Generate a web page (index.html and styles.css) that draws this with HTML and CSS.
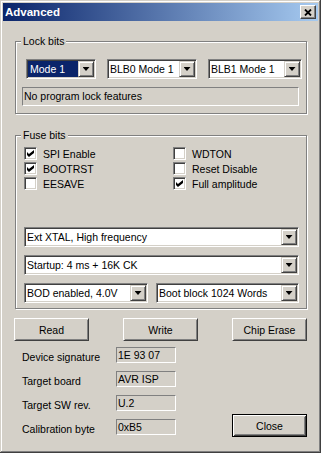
FILE: index.html
```html
<!DOCTYPE html>
<html lang="en">
<head>
    <meta charset="UTF-8">
    <title>Advanced</title>
    <link rel="stylesheet" href="styles.css">
</head>
<body>
    <div class="window">
        <div class="titlebar">
            <span class="title">Advanced</span>
            <span class="title-close">
                <svg width="8" height="7" viewBox="0 0 8 7"><path d="M1 0.5L7 6.5M7 0.5L1 6.5" stroke="#000" stroke-width="1.8"/></svg>
            </span>
        </div>

        <div class="client">
            <!-- Lock bits -->
            <fieldset class="group lock">
                <legend>Lock bits</legend>
                <div class="lock-row">
                    <div class="combo w-mode focused"><span class="combo-text">Mode 1</span><span class="drop"></span></div>
                    <div class="combo w-blb0"><span class="combo-text">BLB0 Mode 1</span><span class="drop"></span></div>
                    <div class="combo w-blb1"><span class="combo-text">BLB1 Mode 1</span><span class="drop"></span></div>
                </div>
                <div class="status">No program lock features</div>
            </fieldset>

            <!-- Fuse bits -->
            <fieldset class="group fuse">
                <legend>Fuse bits</legend>
                <div class="checks">
                    <label class="check"><span class="box checked"></span>SPI Enable</label>
                    <label class="check"><span class="box"></span>WDTON</label>
                    <label class="check"><span class="box checked"></span>BOOTRST</label>
                    <label class="check"><span class="box"></span>Reset Disable</label>
                    <label class="check"><span class="box"></span>EESAVE</label>
                    <label class="check"><span class="box checked"></span>Full amplitude</label>
                </div>
                <div class="fuse-combos">
                    <div class="combo w-full"><span class="combo-text">Ext XTAL, High frequency</span><span class="drop"></span></div>
                    <div class="combo w-full"><span class="combo-text">Startup: 4 ms + 16K CK</span><span class="drop"></span></div>
                    <div class="combo-split">
                        <div class="combo w-bod"><span class="combo-text">BOD enabled, 4.0V</span><span class="drop"></span></div>
                        <div class="combo w-boot"><span class="combo-text">Boot block 1024 Words</span><span class="drop"></span></div>
                    </div>
                </div>
            </fieldset>

            <div class="actions">
                <button class="btn">Read</button>
                <button class="btn">Write</button>
                <button class="btn">Chip Erase</button>
            </div>

            <div class="lower">
                <div class="info">
                    <div class="info-row"><span class="info-label">Device signature</span><span class="info-value">1E 93 07</span></div>
                    <div class="info-row"><span class="info-label">Target board</span><span class="info-value">AVR ISP</span></div>
                    <div class="info-row"><span class="info-label">Target SW rev.</span><span class="info-value">U.2</span></div>
                    <div class="info-row"><span class="info-label">Calibration byte</span><span class="info-value">0xB5</span></div>
                </div>
                <button class="btn default">Close</button>
            </div>
        </div>
    </div>
</body>
</html>
```

FILE: styles.css
```css
* { box-sizing: border-box; }
body { margin: 0; background: #d4d0c8; color: #000; font-family: "Liberation Sans", Arial, sans-serif; font-size: 10.5px; }

.window { width: 321px; height: 453px; padding: 3px; background: #d4d0c8; box-shadow: inset -1px -1px #404040, inset 1px 1px #d4d0c8, inset -2px -2px #808080, inset 2px 2px #fff; }

.titlebar { height: 18px; display: flex; align-items: center; justify-content: space-between; padding: 0 2px; background: linear-gradient(to right, #0a246a, #a6caf0); }
.title { color: #fff; font-weight: bold; font-size: 11.5px; }
.title-close { width: 16px; height: 14px; display: flex; align-items: center; justify-content: center; background: #d4d0c8; border: 1px solid; border-color: #fff #404040 #404040 #fff; box-shadow: inset -1px -1px #808080; }

.client { padding: 0 11px; }

/* etched group boxes */
.group { min-width: 0; width: 292px; margin: 0 0 0 1px; border: 1px solid #808080; box-shadow: inset 1px 1px #fff, 1px 1px #fff; }
.group legend { padding: 0 2px; line-height: 13px; background: #d4d0c8; }
.lock { margin-top: 14px; padding: 11px 4px 7px 6px; }
.lock legend { margin-left: -1px; }
.fuse { margin-top: 15px; padding: 4px 6px 5px 8px; }
.fuse legend { margin-left: -3px; }

.lock-row { display: flex; gap: 11px; padding-left: 4px; }
.status { width: 277px; height: 19px; margin-top: 8px; padding-left: 1px; line-height: 17px; border: 1px solid; border-color: #808080 #fff #fff #808080; }

/* combo boxes */
.combo { height: 20px; display: flex; padding: 1px; background: #fff; border: 1px solid; border-color: #808080 #fff #fff #808080; box-shadow: inset 1px 1px #404040, inset -1px -1px #d4d0c8; }
.combo-text { flex: 1; padding-left: 1px; line-height: 16px; white-space: nowrap; overflow: hidden; }
.combo.focused .combo-text { background: #0a246a; color: #fff; padding-left: 2px; }
.drop { width: 16px; height: 16px; display: flex; align-items: center; justify-content: center; background: #d4d0c8; border: 1px solid; border-color: #d4d0c8 #404040 #404040 #d4d0c8; box-shadow: inset 1px 1px #fff, inset -1px -1px #808080; }
.drop::after { content: ""; width: 7px; height: 4px; background: #000; clip-path: polygon(0 0, 100% 0, 50% 100%); }
.w-mode { width: 70px; }
.w-blb0 { width: 90px; }
.w-blb1 { width: 94px; }
.w-full { width: 275px; }
.w-bod { width: 124px; }
.w-boot { width: 143px; }

/* check boxes */
.checks { display: grid; grid-template-columns: 149px 1fr; grid-auto-rows: 15px; }
.check { display: flex; align-items: center; gap: 6px; }
.box { width: 13px; height: 13px; position: relative; background: #fff; border: 1px solid; border-color: #808080 #fff #fff #808080; box-shadow: inset 1px 1px #404040, inset -1px -1px #d4d0c8; }
.box.checked::after { content: ""; position: absolute; left: 2px; top: 2px; width: 7px; height: 7px; background: #000; clip-path: polygon(0 28%, 28% 57%, 100% 0, 100% 43%, 28% 100%, 0 71%); }

.fuse-combos { margin-top: 36px; display: flex; flex-direction: column; gap: 8px; }
.combo-split { display: flex; gap: 8px; }

/* push buttons */
.btn { width: 75px; height: 23px; padding: 0; font: inherit; color: #000; background: #d4d0c8; border: 1px solid; border-color: #fff #404040 #404040 #fff; box-shadow: inset 1px 1px #d4d0c8, inset -1px -1px #808080; }
.btn.default { border-color: #000; box-shadow: inset 1px 1px #fff, inset -1px -1px #404040, inset 2px 2px #d4d0c8, inset -2px -2px #808080; margin-bottom: -2px; }
.actions { margin-top: 9px; display: flex; justify-content: space-between; }

.lower { margin-top: 6px; display: flex; justify-content: space-between; align-items: flex-end; }
.info { display: flex; flex-direction: column; gap: 8px; padding-left: 8px; }
.info-row { display: flex; height: 16px; }
.info-label { width: 94px; padding-top: 2px; line-height: 16px; }
.info-value { width: 60px; height: 16px; padding: 1px 0 0 1px; line-height: 13px; border: 1px solid; border-color: #808080 #fff #fff #808080; }
```
